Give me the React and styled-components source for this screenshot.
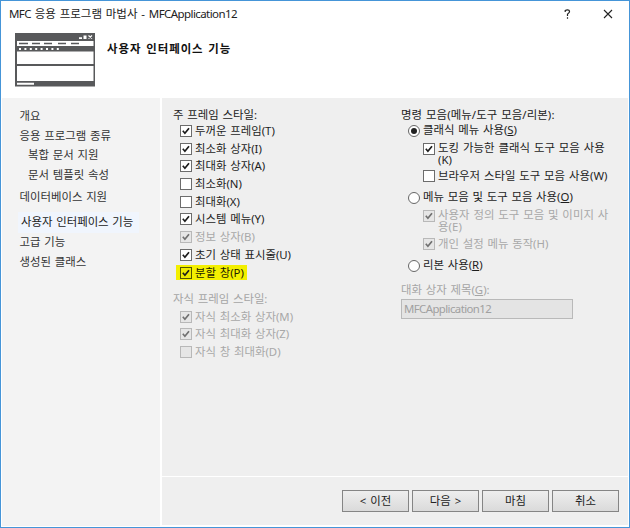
import React from 'react';
import styled, { createGlobalStyle } from 'styled-components';

const Global = createGlobalStyle`
  * { box-sizing: border-box; }
  body { margin: 0; overflow: hidden; }
`;
const Dialog = styled.div`
  width: 630px; height: 528px; border: 1px solid #4595d8; background: #fff;
  font: 11.4px/16px "Noto Sans", "Noto Sans CJK KR", sans-serif; color: #222;
  display: flex; flex-direction: column; white-space: nowrap; word-spacing: 0.8px;
`;
const TitleBar = styled.header`
  height: 28px; padding: 5px 0 0 8px; display: flex; font-size: 11.5px;
  svg { margin-top: 3px; flex: none; }
`;
const Title = styled.span` width: 555px; `;
const Latin = styled.span` letter-spacing: -0.58px; `;
const Banner = styled.div`
  height: 69px; padding: 4px 0 0 14px; display: flex;
`;
const Heading = styled.h1`
  margin: 8px 0 0 12px; font-size: 11.4px; line-height: 16px; font-weight: 700; color: #111; letter-spacing: 1px;
`;
const Body = styled.div` height: 428px; padding: 0 1px; display: flex; gap: 2px; `;
const Sidebar = styled.nav` width: 158px; background: #f3f3f3; padding-top: 10px; `;
const NavItem = styled.div`
  height: ${p => p.$h || 20}px; line-height: 16px; padding-left: ${p => p.$x || 17.5}px; color: #333;
`;
const Selected = styled.div`
  margin: 3px 0 1px 16px; width: 121px; height: 21px; padding: 2px 0 0 3px; background: #f0f5fd; color: #222;
`;
const Main = styled.main` flex: 1; display: flex; flex-direction: column; gap: 1px; `;
const Options = styled.section` height: 378px; background: #efefef; display: flex; padding-top: 9px; `;
const Left = styled.div` width: 229px; padding-left: 11px; `;
const Right = styled.div` width: 230px; padding-left: 10px; `;
const Label = styled.div`
  height: ${p => p.$h || 15}px; line-height: 16px; color: ${p => p.$off ? '#a5a5a5' : '#222'};
  letter-spacing: ${p => p.$ls || 0}px; margin-top: ${p => p.$mt || 0}px;
`;
const Row = styled.div`
  height: ${p => p.$h || 17.7}px; margin-left: ${p => p.$x || 4}px; padding: 2px 0 0 3px; width: max-content;
  display: flex; align-items: flex-start; color: ${p => p.$off ? '#a8a8a8' : '#1d1d1d'};
  svg { flex: none; margin: ${p => p.$my ?? 1}px 3px 0 0; }
`;
const Highlight = styled.div`
  width: 71px; height: 15px; margin: 1px 0 0 3px; padding-left: 4px; background: #f3ef00;
  display: flex; color: #1d1d00;
  svg { flex: none; margin: 2px 3px 0 0; }
`;
const Caption = styled.span`
  line-height: ${p => p.$lh || 14}px; letter-spacing: ${p => p.$ls || 0}px; margin-top: ${p => p.$mt || 0}px;
  u { text-underline-offset: 1px; }
`;
const Field = styled.div`
  width: 172px; height: 20px; margin-top: 2px; padding-left: 2px; border: 1px solid #b9b9b9; background: #e4e4e4;
  color: #a0a0a0; line-height: 17px;
`;
const Footer = styled.footer`
  height: 48px; margin-bottom: 1px; background: #efefef; display: flex; justify-content: flex-end; gap: 3px; padding: 13px 9px 0 0;
`;
const Button = styled.button`
  width: 67px; height: 22px; padding: 0; border: 1px solid #858585; color: #222; font: inherit; line-height: 20px;
  background: linear-gradient(#eeeeee, #dadada); word-spacing: 1px;
`;

function Check({ on, off, fill }) {
  return (
    <svg width="12" height="12" viewBox="0 0 12 12">
      <rect x="0.5" y="0.5" width="11" height="11" fill={fill || (off ? '#e6e6e6' : '#fff')} stroke={off ? '#b8b8b8' : fill ? '#555500' : '#6c6c6c'} />
      {on && <path d="M2.8 5.8 4.9 8.2 9 3.2" fill="none" stroke={off ? '#707070' : '#1c1c1c'} strokeWidth="1.7" />}
    </svg>
  );
}
function Radio({ on }) {
  return (
    <svg width="12" height="12" viewBox="0 0 12 12">
      <circle cx="6" cy="6" r="5.5" fill="#fff" stroke="#666" />
      {on && <circle cx="6" cy="6" r="3" fill="#222" />}
    </svg>
  );
}
function WindowArt() {
  return (
    <svg width="80" height="54" viewBox="0 0 80 54" fill="#fff">
      <path fill="#58595b" d="M0 0h80v53.5H0z" />
      <path d="M2 8h76.5v5H2zM2 18.5h76.5V31H2zM2 33h76.5v15H2zM2 49.7h17v2H2zM64 4.3h3V6h-3zM68.5 2.5h3V6h-3z" />
      <path stroke="#fff" strokeWidth="1.2" d="m73.5 2.5 3.5 3m0-3-3.5 3" />
      <path stroke="#58595b" strokeWidth="1.4" d="M4 10.5h9m4 0h8m4 0h8m6 0h8m5 0h8" />
      <path stroke="#fff" strokeWidth="2" strokeDasharray="2 3.4" d="M4 16h41" />
    </svg>
  );
}
const frameStyles = [
  ['두꺼운 프레임(T)', 1, 0], ['최소화 상자(I)', 1, 0], ['최대화 상자(A)', 1, 0], ['최소화(N)', 0, 0],
  ['최대화(X)', 0, 0], ['시스템 메뉴(Y)', 1, 0], ['정보 상자(B)', 1, 1], ['초기 상태 표시줄(U)', 1, 0],
];
const childStyles = [['자식 최소화 상자(M)', 1, 1], ['자식 최대화 상자(Z)', 1, 1], ['자식 창 최대화(D)', 0, 1]];
const CheckRow = ({ item: [text, on, off] }) => (
  <Row $off={off}><Check on={on} off={off} /><Caption>{text}</Caption></Row>
);

export default function App() {
  return (
    <Dialog>
      <Global />
      <TitleBar>
        <Title><Latin>MFC</Latin> 응용 프로그램 마법사 - <Latin>MFCApplication12</Latin></Title>
        <svg width="7" height="11" viewBox="0 0 7 11"><path d="M1.2 3V1.5Q3.4.2 5 1.3q1 1.2 0 2.4L3.5 5.2V7M3.5 8.3v1.4" fill="none" stroke="#222" strokeWidth="1.2" /></svg>
        <svg width="46" height="11" viewBox="0 0 46 11"><path d="m33 1 8 8m0-8-8 8" stroke="#222" strokeWidth="1.1" /></svg>
      </TitleBar>
      <Banner><WindowArt /><Heading>사용자 인터페이스 기능</Heading></Banner>
      <Body>
        <Sidebar>
          <NavItem>개요</NavItem>
          <NavItem $h={19}>응용 프로그램 종류</NavItem>
          <NavItem $x={26}>복합 문서 지원</NavItem>
          <NavItem $x={26} $h={22}>문서 템플릿 속성</NavItem>
          <NavItem>데이터베이스 지원</NavItem>
          <Selected>사용자 인터페이스 기능</Selected>
          <NavItem>고급 기능</NavItem>
          <NavItem>생성된 클래스</NavItem>
        </Sidebar>
        <Main>
          <Options>
            <Left>
              <Label>주 프레임 스타일:</Label>
              {frameStyles.map(i => <CheckRow key={i[0]} item={i} />)}
              <Highlight><Check on fill="#eeea00" /><Caption $lh={15}>분할 창(P)</Caption></Highlight>
              <Label $off $mt={11} $h={17}>자식 프레임 스타일:</Label>
              {childStyles.map(i => <CheckRow key={i[0]} item={i} />)}
            </Left>
            <Right>
              <Label $h={14} $ls={0.1}>명령 모음(메뉴/도구 모음/리본):</Label>
              <Row $h={18} $my={2}><Radio on /><Caption>클래식 메뉴 사용(<u>S</u>)</Caption></Row>
              <Row $x={19} $h={28} $my={2}><Check on /><Caption $lh={12} $mt={1} $ls={0.07}>도킹 가능한 클래식 도구 모음 사용<br />(K)</Caption></Row>
              <Row $x={19} $h={21}><Check /><Caption $ls={0.04}>브라우저 스타일 도구 모음 사용(W)</Caption></Row>
              <Row $h={19} $my={2}><Radio /><Caption>메뉴 모음 및 도구 모음 사용(<u>O</u>)</Caption></Row>
              <Row $x={19} $h={28} $off><Check on off /><Caption $lh={12} $ls={0.05}>사용자 정의 도구 모음 및 이미지 사<br />용(E)</Caption></Row>
              <Row $x={19} $h={21} $off><Check on off /><Caption>개인 설정 메뉴 동작(H)</Caption></Row>
              <Row $h={26} $my={2}><Radio /><Caption>리본 사용(<u>R</u>)</Caption></Row>
              <Label $off>대화 상자 제목(<u>G</u>):</Label>
              <Field><Latin>MFCApplication12</Latin></Field>
            </Right>
          </Options>
          <Footer>
            <Button>&lt; 이전</Button><Button>다음 &gt;</Button><Button>마침</Button><Button>취소</Button>
          </Footer>
        </Main>
      </Body>
    </Dialog>
  );
}
